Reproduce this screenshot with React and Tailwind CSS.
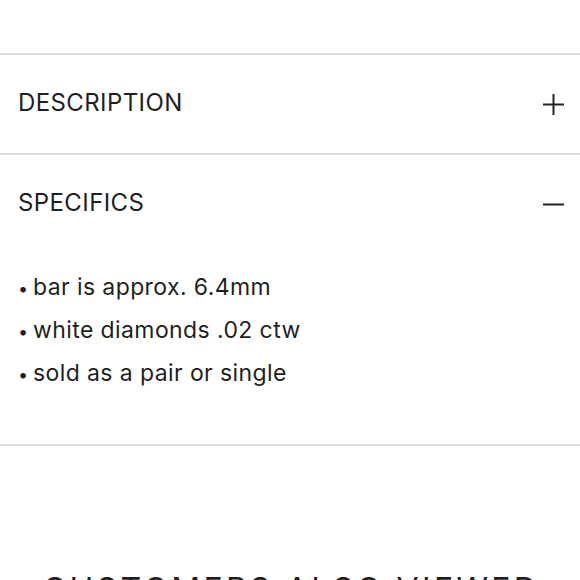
import React from "react";

const specs = ["bar is approx. 6.4mm", "white diamonds .02 ctw", "sold as a pair or single"];

const PlusIcon = () => (
  <svg width="21" height="21" viewBox="0 0 21 21" className="mt-[3px] text-[#222]">
    <path d="M0 10.5h21M10.5 0v21" stroke="currentColor" strokeWidth="2" fill="none" />
  </svg>
);

const MinusIcon = () => (
  <svg width="21" height="21" viewBox="0 0 21 21" className="mt-[3px] text-[#222]">
    <path d="M0 10.5h21" stroke="currentColor" strokeWidth="2" fill="none" />
  </svg>
);

export default function App() {
  return (
    <div className="w-[580px] h-[580px] overflow-hidden bg-white text-[#1f1f1f] font-['Inter','Liberation_Sans',sans-serif]">
      <div className="pt-[53px]">
        {/* Description */}
        <div className="border-t-2 border-[#dedede] h-[100px] pb-[3px] flex items-center justify-between pl-[18px] pr-[16px]">
          <span className="text-[24px] leading-none tracking-[0.4px]">DESCRIPTION</span>
          <PlusIcon />
        </div>

        {/* Specifics */}
        <div className="border-t-2 border-b-2 border-[#dedede]">
          <div className="h-[98px] pb-[3px] flex items-center justify-between pl-[18px] pr-[16px]">
            <span className="text-[24px] leading-none tracking-[0.4px]">SPECIFICS</span>
            <MinusIcon />
          </div>
          <ul className="pl-[18px] pt-[13px] pb-[49px] text-[23px] tracking-[0.4px]">
            {specs.map((s) => (
              <li key={s} className="flex items-baseline h-[43px] leading-[43px]">
                <span className="w-[15px] text-[18px] leading-[43px]">•</span>
                <span>{s}</span>
              </li>
            ))}
          </ul>
        </div>

        {/* Customers also viewed */}
        <h2 className="mt-[128px] pl-[3px] text-center text-[32px] tracking-[3.3px] leading-none whitespace-nowrap">
          CUSTOMERS ALSO VIEWED
        </h2>
      </div>
    </div>
  );
}
